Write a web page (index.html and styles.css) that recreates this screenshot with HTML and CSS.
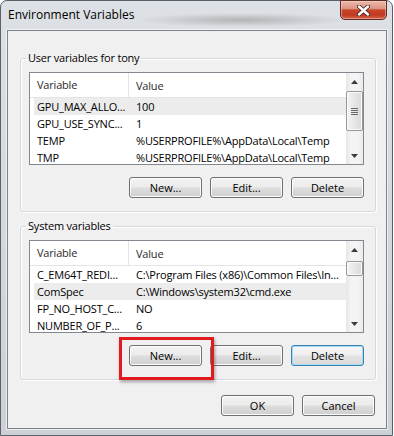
FILE: index.html
```html
<!DOCTYPE html>
<html lang="en">
<head>
  <meta charset="UTF-8">
  <title>Environment Variables</title>
  <link rel="stylesheet" href="styles.css">
</head>
<body>
  <div class="window">
    <div class="titlebar">
      <div class="title">Environment Variables</div>
      <div class="close">
        <svg width="13" height="11" viewBox="0 0 13 11">
          <path d="M2 1.5 L11 9.5 M11 1.5 L2 9.5" stroke="#4a2520" stroke-width="4.2" stroke-linecap="round"/>
          <path d="M2 1.5 L11 9.5 M11 1.5 L2 9.5" stroke="#fff" stroke-width="2.4" stroke-linecap="round"/>
        </svg>
      </div>
    </div>
    <div class="client">
      <fieldset class="group">
        <legend>User variables for tony</legend>
        <div class="list">
          <div class="list-body">
            <div class="list-head">
              <div class="cell col1">Variable</div>
              <div class="cell col2">Value</div>
            </div>
            <div class="row sel">
              <div class="cell col1">GPU_MAX_ALLO...</div>
              <div class="cell col2">100</div>
            </div>
            <div class="row">
              <div class="cell col1">GPU_USE_SYNC...</div>
              <div class="cell col2">1</div>
            </div>
            <div class="row">
              <div class="cell col1">TEMP</div>
              <div class="cell col2">%USERPROFILE%\AppData\Local\Temp</div>
            </div>
            <div class="row">
              <div class="cell col1">TMP</div>
              <div class="cell col2">%USERPROFILE%\AppData\Local\Temp</div>
            </div>
          </div>
          <div class="scrollbar">
            <div class="sb-btn">
              <svg width="7" height="4" viewBox="0 0 7 4"><path d="M0 4 L3.5 0 L7 4 Z" fill="#3c3c3c"/></svg>
            </div>
            <div class="sb-track">
              <div class="thumb">
                <svg width="7" height="7" viewBox="0 0 7 7">
                  <path d="M0 0.5 H7 M0 2.5 H7 M0 4.5 H7 M0 6.5 H7" stroke="#6a6a6a" stroke-width="1"/>
                </svg>
              </div>
            </div>
            <div class="sb-btn">
              <svg width="7" height="4" viewBox="0 0 7 4"><path d="M0 0 L3.5 4 L7 0 Z" fill="#3c3c3c"/></svg>
            </div>
          </div>
        </div>
        <div class="btn-row">
          <button class="btn">New...</button>
          <button class="btn">Edit...</button>
          <button class="btn">Delete</button>
        </div>
      </fieldset>

      <fieldset class="group">
        <legend>System variables</legend>
        <div class="list">
          <div class="list-body">
            <div class="list-head">
              <div class="cell col1">Variable</div>
              <div class="cell col2">Value</div>
            </div>
            <div class="row">
              <div class="cell col1">C_EM64T_REDI...</div>
              <div class="cell col2">C:\Program Files (x86)\Common Files\In...</div>
            </div>
            <div class="row sel">
              <div class="cell col1">ComSpec</div>
              <div class="cell col2">C:\Windows\system32\cmd.exe</div>
            </div>
            <div class="row">
              <div class="cell col1">FP_NO_HOST_C...</div>
              <div class="cell col2">NO</div>
            </div>
            <div class="row">
              <div class="cell col1">NUMBER_OF_P...</div>
              <div class="cell col2">6</div>
            </div>
          </div>
          <div class="scrollbar">
            <div class="sb-btn">
              <svg width="7" height="4" viewBox="0 0 7 4"><path d="M0 4 L3.5 0 L7 4 Z" fill="#3c3c3c"/></svg>
            </div>
            <div class="sb-track">
              <div class="thumb small"></div>
            </div>
            <div class="sb-btn">
              <svg width="7" height="4" viewBox="0 0 7 4"><path d="M0 0 L3.5 4 L7 0 Z" fill="#3c3c3c"/></svg>
            </div>
          </div>
        </div>
        <div class="btn-row">
          <div class="callout-wrap">
            <button class="btn">New...</button>
            <div class="callout"></div>
          </div>
          <button class="btn">Edit...</button>
          <button class="btn focus">Delete</button>
        </div>
      </fieldset>

      <div class="footer">
        <button class="btn">OK</button>
        <button class="btn">Cancel</button>
      </div>
    </div>
  </div>
</body>
</html>
```

FILE: styles.css
```css
* {
  box-sizing: border-box;
}
body {
  margin: 0;
  font-family: "Open Sans", "Noto Sans", sans-serif;
  font-size: 11px;
  letter-spacing: -0.2px;
  color: #000;
  background: #fff;
}
.window {
  width: 393px;
  height: 436px;
  border: 1px solid #59626c;
  border-radius: 7px 7px 0 0;
  background: linear-gradient(#dde0e4, #cdd1d6);
  padding: 0 5px 6px 6px;
  display: flex;
  flex-direction: column;
}
.titlebar {
  height: 29px;
  flex: none;
  display: flex;
  align-items: flex-start;
  justify-content: space-between;
  background: radial-gradient(ellipse 105px 7px at 235px 19px, rgba(70, 70, 70, 0.28), rgba(70, 70, 70, 0));
}
.title {
  line-height: 28px;
  padding-left: 1px;
  font-size: 12px;
  letter-spacing: 0;
}
.close {
  width: 47px;
  height: 20px;
  margin-top: -1px;
  border: 1px solid #5b2c23;
  border-radius: 0 0 5px 5px;
  background: linear-gradient(#ecb8aa 0%, #dc9582 42%, #c9452b 50%, #c03a21 78%, #d9664a 100%);
  box-shadow: inset 0 0 0 1px rgba(255, 220, 210, 0.45);
  display: flex;
  align-items: center;
  justify-content: center;
}
.client {
  flex: 1;
  background: #f0f0f0;
  border: 1px solid #7b828a;
  box-shadow: 0 0 0 1px rgba(255, 255, 255, 0.6);
  padding: 19px 10px 0 12px;
  display: flex;
  flex-direction: column;
}
.group {
  margin: 0;
  min-width: 0;
  border: 1px solid #d0d9df;
  border-radius: 3px;
  padding: 6px 11px 13px 8px;
  box-shadow: inset 1px 1px 0 #fff, 1px 1px 0 #fff;
}
.group + .group {
  margin-top: 6px;
}
legend {
  padding: 0 2px;
  margin-left: -3px;
  line-height: 16px;
}
.list {
  display: flex;
  height: 93px;
  border: 1px solid #828790;
  background: #fff;
}
.list-body {
  flex: 1;
  min-width: 0;
  overflow: hidden;
}
.cell {
  white-space: nowrap;
  overflow: hidden;
}
.list-head {
  display: flex;
  align-items: center;
  height: 25px;
  border-bottom: 1px solid #e5e5e5;
  color: #2b2b2b;
}
.list-head .col1 {
  width: 99px;
  padding-left: 7px;
  line-height: 24px;
  border-right: 1px solid #e5e5e5;
}
.row {
  display: flex;
  align-items: center;
  height: 17px;
  margin-left: 4px;
}
.row.sel {
  background: #ececec;
}
.row .col1 {
  width: 95px;
  padding-left: 3px;
}
.col2 {
  flex: 1;
  padding-left: 7px;
}
.scrollbar {
  width: 17px;
  flex: none;
  display: flex;
  flex-direction: column;
  background: linear-gradient(90deg, #e6e6e6, #f4f4f4 30%, #f4f4f4 70%, #eaeaea);
}
.sb-btn {
  height: 17px;
  display: flex;
  align-items: center;
  justify-content: center;
}
.sb-btn svg {
  display: block;
}
.sb-track {
  flex: 1;
  padding-top: 1px;
}
.thumb {
  height: 40px;
  border: 1px solid #979797;
  border-radius: 2px;
  background: linear-gradient(90deg, #f4f4f4, #e6e6e6 50%, #d9d9d9);
  box-shadow: inset 0 0 0 1px #fbfbfb;
  display: flex;
  align-items: center;
  justify-content: center;
}
.thumb.small {
  height: 15px;
  margin-top: 2px;
}
.btn-row {
  display: flex;
  justify-content: flex-end;
  gap: 8px;
  margin-top: 12px;
}
.btn {
  width: 73px;
  height: 21px;
  padding: 0;
  border: 1px solid #707070;
  border-radius: 3px;
  background: linear-gradient(#f3f3f3 0%, #ebebeb 48%, #dddddd 52%, #cfcfcf 100%);
  box-shadow: inset 0 0 0 1px #fcfcfc;
  font: inherit;
  color: #000;
}
.btn.focus {
  border-color: #3c7fb1;
  background: linear-gradient(#f6f6f6 0%, #efefef 48%, #e3e3e3 52%, #d9d9d9 100%);
  box-shadow: inset 0 0 0 1px #9fdcf6;
}
.callout-wrap {
  position: relative;
  display: flex;
}
.callout {
  position: absolute;
  left: -10px;
  top: -8px;
  width: 95px;
  height: 43px;
  border: 3px solid #e01a1e;
  box-shadow: 1px 2px 3px rgba(0, 0, 0, 0.35);
}
.footer {
  display: flex;
  justify-content: flex-end;
  gap: 8px;
  margin-top: 15px;
  padding-right: 1px;
}
```
